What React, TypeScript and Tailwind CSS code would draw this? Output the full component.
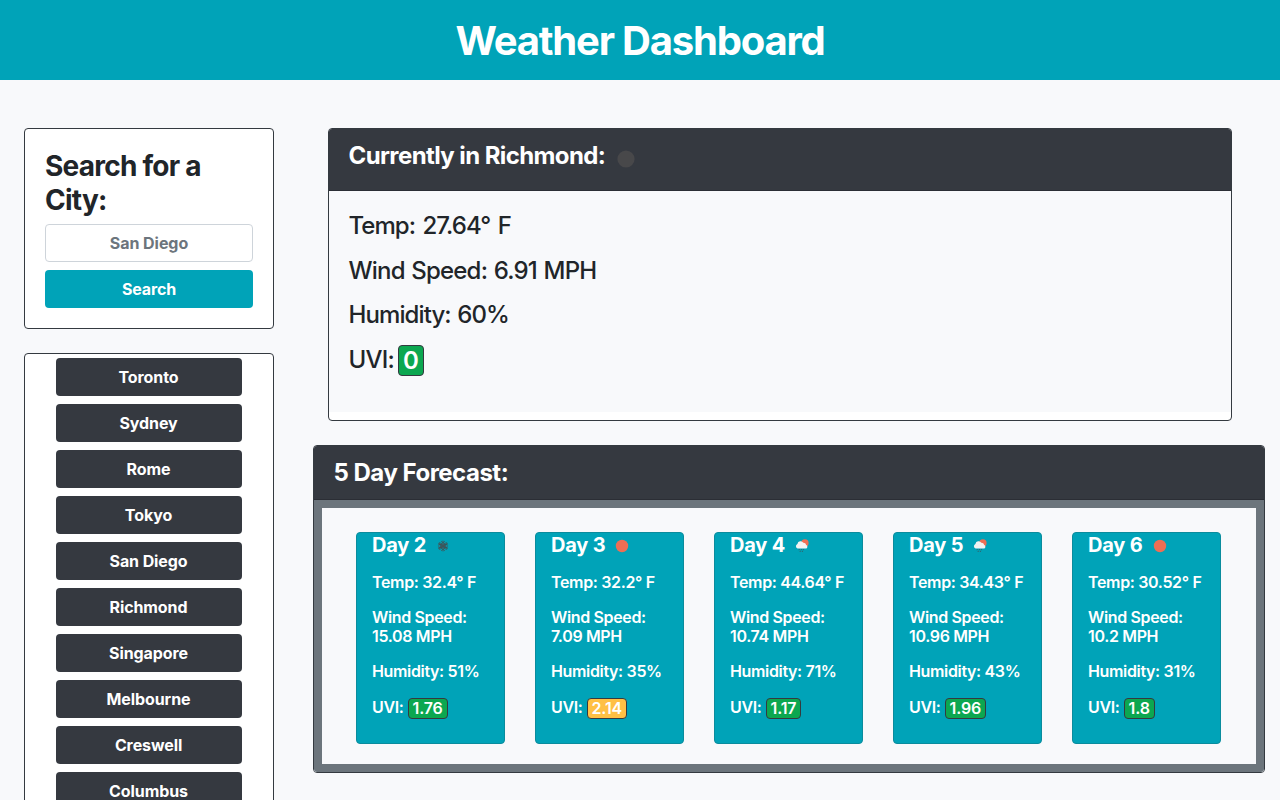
import React from "react";

type Day = { day: number; icon: "snow" | "sun" | "rain"; temp: string; wind: string; hum: string; uvi: string; warn?: boolean };

const cities = ["Toronto", "Sydney", "Rome", "Tokyo", "San Diego", "Richmond", "Singapore", "Melbourne", "Creswell", "Columbus"];

const days: Day[] = [
  { day: 2, icon: "snow", temp: "32.4", wind: "15.08", hum: "51", uvi: "1.76" },
  { day: 3, icon: "sun", temp: "32.2", wind: "7.09", hum: "35", uvi: "2.14", warn: true },
  { day: 4, icon: "rain", temp: "44.64", wind: "10.74", hum: "71", uvi: "1.17" },
  { day: 5, icon: "rain", temp: "34.43", wind: "10.96", hum: "43", uvi: "1.96" },
  { day: 6, icon: "sun", temp: "30.52", wind: "10.2", hum: "31", uvi: "1.8" },
];

function WeatherIcon({ kind }: { kind: Day["icon"] }) {
  return (
    <svg width="20" height="20" viewBox="0 0 20 20" className="mt-[2px] shrink-0">
      {kind === "sun" && <circle cx="10" cy="10" r="6.2" fill="#ee6e54" />}
      {kind === "snow" && (
        <g stroke="#48484a" strokeWidth="0.75" fill="none">
          {[0, 60, 120, 180, 240, 300].map((a) => (
            <path key={a} d="M10 10V4.6M8.2 5.2L10 6.8L11.8 5.2M8.4 7.3L10 8.5L11.6 7.3" transform={`rotate(${a} 10 10)`} />
          ))}
        </g>
      )}
      {kind === "rain" && (
        <g>
          <circle cx="12.9" cy="7" r="3.7" fill="#ee6e54" />
          <path d="M5.6 12.4A2.4 2.4 0 0 1 5.4 7.9A3.3 3.3 0 0 1 11.4 6.8A2.9 2.9 0 0 1 14.2 9.1A1.8 1.8 0 0 1 14.4 12.4Z" fill="#f2f2f2" />
          <path d="M7.4 13L7 14.2M9.6 13L9.2 14.2M11.6 13L11.2 14.2M8.4 14.8L8 16M10.6 14.8L10.2 16" stroke="#48484a" strokeWidth="0.7" />
        </g>
      )}
    </svg>
  );
}

function ForecastCard({ d }: { d: Day }) {
  return (
    <div className="h-[212px] w-[149px] rounded border border-[#0a8c9d] bg-[#00a3b8] pl-[15px] text-[16px] font-semibold leading-[19.2px] tracking-[-0.35px] text-white">
      <div className="flex h-6 items-center gap-[7px]">
        <h5 className="whitespace-nowrap text-[20px] font-bold leading-6 tracking-[-0.2px]">Day {d.day}</h5>
        <WeatherIcon kind={d.icon} />
      </div>
      <p className="mt-4 whitespace-nowrap">Temp: {d.temp}° F</p>
      <p className="mt-4">
        Wind Speed:
        <br />
        {d.wind} MPH
      </p>
      <p className="mt-[15px]">Humidity: {d.hum}%</p>
      <div className="mt-[17px] flex gap-1">
        <span>UVI:</span>
        <span className={`h-[21px] rounded border border-[#343a40] px-1 leading-[19px] tracking-[-0.15px] ${d.warn ? "bg-[#ffc044]" : "bg-[#0ca750]"}`}>{d.uvi}</span>
      </div>
    </div>
  );
}

export default function App() {
  return (
    <div className="h-[800px] overflow-hidden bg-[#f8f9fb] font-['Inter','Liberation_Sans',sans-serif] text-[#212529]">
      <header className="flex h-20 items-center justify-center bg-[#00a3b8] pt-px text-white">
        <h1 className="text-[40px] font-bold leading-[48px] tracking-[-1.2px]">Weather Dashboard</h1>
      </header>
      <div className="flex items-start pl-6 pt-12">
        <aside className="w-[250px] shrink-0">
          <section className="h-[201px] rounded border border-[#343a40] bg-white px-5 pt-[21px]">
            <h3 className="text-[28px] font-bold leading-[33.6px] tracking-[-0.75px]">
              Search for a
              <br />
              City:
            </h3>
            <input
              placeholder="San Diego"
              className="mt-[7px] block h-[38px] w-full rounded border border-[#ced4da] bg-white text-center text-[16px] font-bold tracking-[-0.05px] placeholder:text-[#6c757d] placeholder:opacity-100"
            />
            <button className="mt-2 block h-[38px] w-full rounded bg-[#00a3b8] text-[16px] font-bold tracking-[-0.15px] text-white">Search</button>
          </section>
          <section className="mt-6 flex flex-col gap-2 rounded border border-[#343a40] bg-white px-[31px] py-1">
            {cities.map((c) => (
              <button key={c} className="h-[38px] shrink-0 rounded bg-[#353940] pr-px text-[16px] font-bold tracking-[-0.1px] text-white">
                {c}
              </button>
            ))}
          </section>
        </aside>
        <main className="ml-[39px] w-[952px] shrink-0">
          <section className="ml-[15px] h-[293px] w-[904px] overflow-hidden rounded border border-[#343a40] bg-white">
            <div className="flex h-[62px] items-start border-b border-[#2b2e35] bg-[#353940] pl-[19.5px] pt-[13px] text-white">
              <h4 className="text-[24px] font-bold leading-[28.8px] tracking-[-0.6px]">Currently in Richmond:</h4>
              <svg width="18" height="18" viewBox="0 0 18 18" className="ml-3 mt-[8px]">
                <circle cx="9" cy="9" r="8.6" fill="#48484a" />
              </svg>
            </div>
            <div className="flex h-[221px] flex-col gap-4 bg-[#f8f9fb] pl-[19.5px] pt-[21px] text-[24px] font-medium leading-[28.8px] tracking-[-0.8px] [word-spacing:1px]">
              <p className="tracking-[-0.95px] [word-spacing:2px]">Temp: 27.64° F</p>
              <p>Wind Speed: 6.91 MPH</p>
              <p className="-mt-px tracking-[-0.9px]">Humidity: 60%</p>
              <div className="flex gap-1">
                <span className="mt-px">UVI:</span>
                <span className="h-[31px] w-[26px] rounded border border-[#343a40] bg-[#0ca750] text-center font-semibold leading-[30px] tracking-normal text-white">0</span>
              </div>
            </div>
          </section>
          <section className="mt-6 h-[328px] overflow-hidden rounded border border-[#343a40]">
            <div className="h-[54px] border-b border-[#2b2e35] bg-[#353940] pl-[19.5px] pt-[13px] text-white">
              <h4 className="text-[24px] font-bold leading-[28.8px] tracking-[-0.5px]">5 Day Forecast:</h4>
            </div>
            <div className="flex h-[272px] gap-[30px] border-8 border-[#6c757c] bg-[#f8f9fb] pl-[34px] pt-6">
              {days.map((d) => (
                <ForecastCard key={d.day} d={d} />
              ))}
            </div>
          </section>
        </main>
      </div>
    </div>
  );
}
